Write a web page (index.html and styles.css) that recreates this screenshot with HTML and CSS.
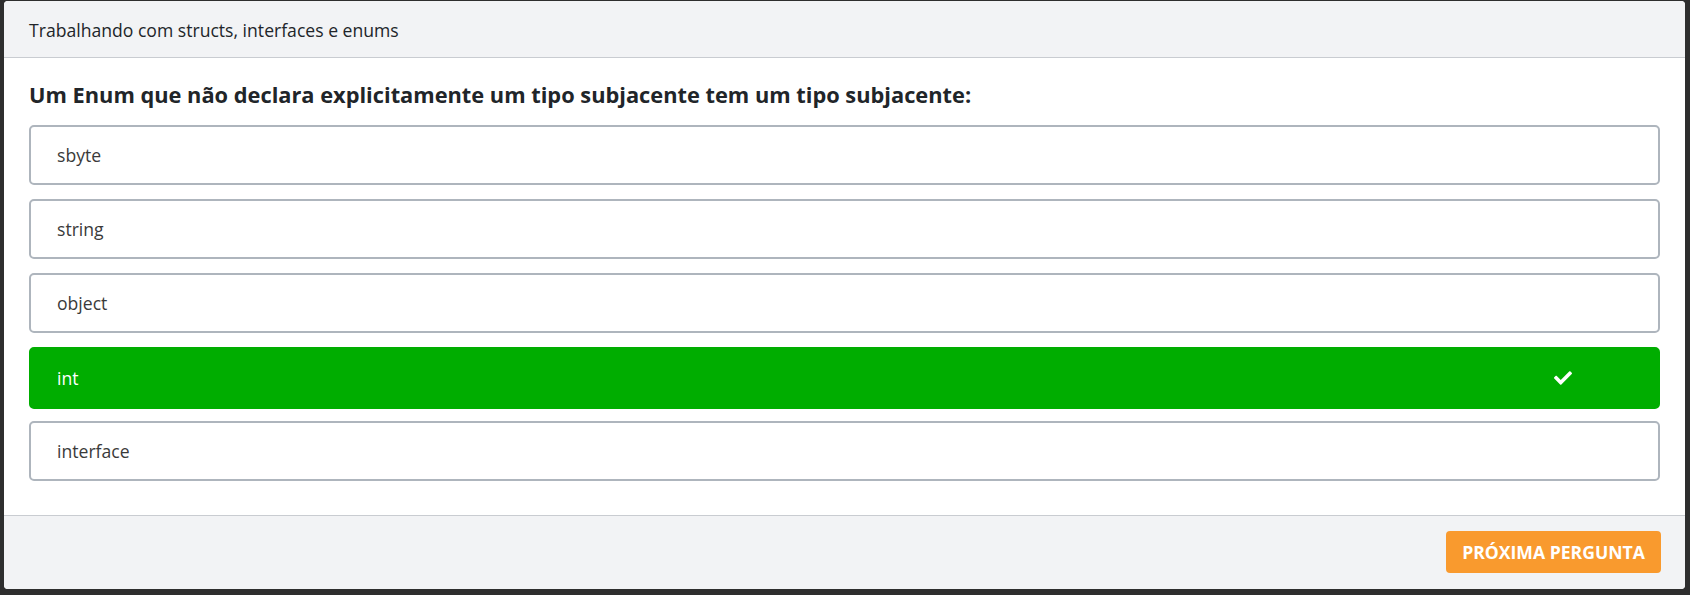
FILE: index.html
```html
<!DOCTYPE html>
<html lang="pt-BR">
<head>
<meta charset="utf-8">
<title>Quiz</title>
<link rel="stylesheet" href="styles.css">
</head>
<body>
<div class="card">
  <div class="card-header">Trabalhando com structs, interfaces e enums</div>
  <div class="card-body">
    <h2 class="question">Um Enum que não declara explicitamente um tipo subjacente tem um tipo subjacente:</h2>
    <div class="options">
      <div class="option">sbyte</div>
      <div class="option">string</div>
      <div class="option">object</div>
      <div class="option correct"><span>int</span>
        <svg class="check" viewBox="0 0 512 512" width="18" height="18"><path fill="#fff" d="M173.898 439.404l-166.4-166.4c-9.997-9.997-9.997-26.206 0-36.204l36.203-36.204c9.997-9.998 26.207-9.998 36.204 0L192 312.69 432.095 72.596c9.997-9.997 26.207-9.997 36.204 0l36.203 36.204c9.997 9.997 9.997 26.206 0 36.204l-294.4 294.401c-9.998 9.997-26.207 9.997-36.204-.001z"/></svg>
      </div>
      <div class="option">interface</div>
    </div>
  </div>
  <div class="card-footer">
    <button class="btn-next">PRÓXIMA PERGUNTA</button>
  </div>
</div>
</body>
</html>
```
FILE: styles.css
```css
html, body {
  margin: 0;
  padding: 0;
}
body {
  background: #2e2e2e;
  font-family: "Open Sans", "Noto Sans", sans-serif;
  color: #212529;
  padding: 1px 5px 6px 4px;
  height: 595px;
  box-sizing: border-box;
}
.card {
  background: #fff;
  border-radius: 4px;
  height: 588px;
  display: flex;
  flex-direction: column;
  overflow: hidden;
}
.card-header {
  background: #f2f3f5;
  border-bottom: 1px solid #c9ccd1;
  box-sizing: border-box;
  padding: 1px 25px 0 25px;
  display: flex;
  align-items: center;
  font-size: 17.6px;
  color: #212529;
  flex: none;
  height: 57px;
}
.card-body {
  padding: 22px 25px 0 25px;
  flex: 1;
}
.question {
  margin: 0 0 15px 0;
  font-size: 21.8px;
  font-weight: 700;
  line-height: 30px;
  color: #212529;
}
.options {
  display: flex;
  flex-direction: column;
  gap: 14px;
}
.option {
  height: 60px;
  box-sizing: border-box;
  border: 2px solid #aeb5bd;
  border-radius: 5px;
  padding: 0 26px;
  display: flex;
  align-items: center;
  font-size: 17.6px;
  color: #3a3a3a;
}
.option.correct {
  background: #00ad00;
  border-color: #00ad00;
  color: #fff;
  justify-content: space-between;
  padding-right: 86px;
  height: 62px;
  margin-bottom: -2px;
}
.check {
  display: block;
}
.card-footer {
  flex: none;
  height: 74px;
  box-sizing: border-box;
  background: #f2f3f5;
  border-top: 1px solid #c9ccd1;
  display: flex;
  align-items: center;
  justify-content: flex-end;
  padding: 0 24px 1px 0;
}
.btn-next {
  background: #f99a2e;
  color: #fff;
  border: none;
  border-radius: 4px;
  height: 42px;
  width: 215px;
  font-family: "Open Sans", "Noto Sans", sans-serif;
  font-weight: 700;
  font-size: 17.6px;
  padding: 0;
  cursor: pointer;
}
```
